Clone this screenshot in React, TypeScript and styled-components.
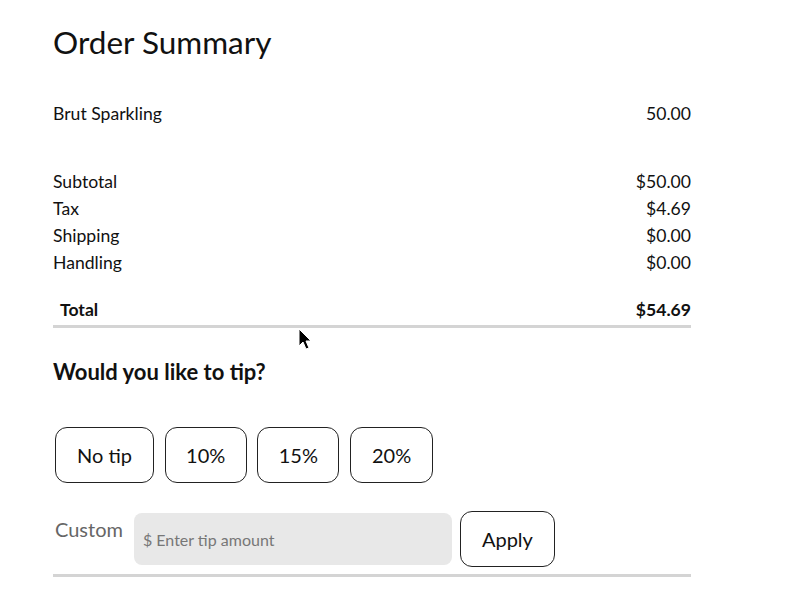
import React from "react";
import styled, { createGlobalStyle } from "styled-components";

const GlobalStyle = createGlobalStyle`
  html, body {
    margin: 0;
    padding: 0;
    background: #ffffff;
  }
  body {
    font-family: "Lato", "Liberation Sans", sans-serif;
    color: #111;
  }
`;

interface Line {
  label: string;
  value: string;
}

const items: Line[] = [{ label: "Brut Sparkling", value: "50.00" }];

const totals: Line[] = [
  { label: "Subtotal", value: "$50.00" },
  { label: "Tax", value: "$4.69" },
  { label: "Shipping", value: "$0.00" },
  { label: "Handling", value: "$0.00" },
];

const tips = [
  { label: "No tip", width: 99 },
  { label: "10%", width: 82 },
  { label: "15%", width: 82 },
  { label: "20%", width: 83 },
];

const Page = styled.div`
  position: relative;
  width: 638px;
  padding: 22px 0 0 53px;
`;

const Title = styled.h1`
  margin: 0;
  font-size: 31.5px;
  font-weight: 400;
  line-height: 40px;
`;

const Section = styled.div<{ gap: number }>`
  display: flex;
  flex-direction: column;
  margin-top: ${({ gap }) => gap}px;
`;

const Row = styled.div`
  display: flex;
  justify-content: space-between;
  font-size: 17.6px;
  line-height: 27px;
`;

const TotalRow = styled(Row)`
  font-weight: 700;
  padding: 0 0 2px 7px;
  margin-top: 20px;
  border-bottom: 3px solid #d4d4d4;
`;

const TipHeading = styled.h2`
  margin: 29px 0 0;
  font-size: 22px;
  font-weight: 700;
  line-height: 30px;
`;

const TipRow = styled.div`
  display: flex;
  gap: 10.7px;
  margin: 40px 0 0 2px;
`;

const TipButton = styled.button<{ w: number }>`
  width: ${({ w }) => w}px;
  height: 56px;
  padding: 0;
  border: 1px solid #222;
  border-radius: 12px;
  background: #fff;
  font-family: "Lato", "Liberation Sans", sans-serif;
  font-size: 20px;
  color: #111;
`;

const CustomRow = styled.div`
  display: flex;
  align-items: center;
  margin-top: 28px;
  padding: 0 0 7px 2px;
  border-bottom: 3px solid #d4d4d4;
`;

const CustomLabel = styled.span`
  font-size: 20px;
  color: #666;
  margin: -20px 11px 0 0;
`;

const TipInput = styled.input`
  width: 318px;
  height: 52px;
  box-sizing: border-box;
  border: none;
  border-radius: 8px;
  background: #e8e8e8;
  padding: 0 9px;
  font-family: "Lato", "Liberation Sans", sans-serif;
  font-size: 16px;
  color: #333;
  &::placeholder {
    color: #777;
  }
`;

const ApplyButton = styled(TipButton)`
  margin-left: 8px;
`;

const Cursor = styled.svg`
  position: absolute;
  left: 298px;
  top: 328px;
`;

export default function App() {
  return (
    <>
      <GlobalStyle />
      <Page>
        <Title>Order Summary</Title>
        <Section gap={38}>
          {items.map((i) => (
            <Row key={i.label}>
              <span>{i.label}</span>
              <span>{i.value}</span>
            </Row>
          ))}
        </Section>
        <Section gap={41}>
          {totals.map((t) => (
            <Row key={t.label}>
              <span>{t.label}</span>
              <span>{t.value}</span>
            </Row>
          ))}
          <TotalRow>
            <span>Total</span>
            <span>$54.69</span>
          </TotalRow>
        </Section>
        <TipHeading>Would you like to tip?</TipHeading>
        <TipRow>
          {tips.map((t) => (
            <TipButton key={t.label} w={t.width}>
              {t.label}
            </TipButton>
          ))}
        </TipRow>
        <CustomRow>
          <CustomLabel>Custom</CustomLabel>
          <TipInput placeholder="$ Enter tip amount" />
          <ApplyButton w={95}>Apply</ApplyButton>
        </CustomRow>
        <Cursor width="16" height="24" viewBox="0 0 16 24">
          <path
            d="M1 1 L1 18 L5 14 L8 21 L11 20 L8 13 L13 13 Z"
            fill="#000"
            stroke="#fff"
            strokeWidth="1"
          />
        </Cursor>
      </Page>
    </>
  );
}
